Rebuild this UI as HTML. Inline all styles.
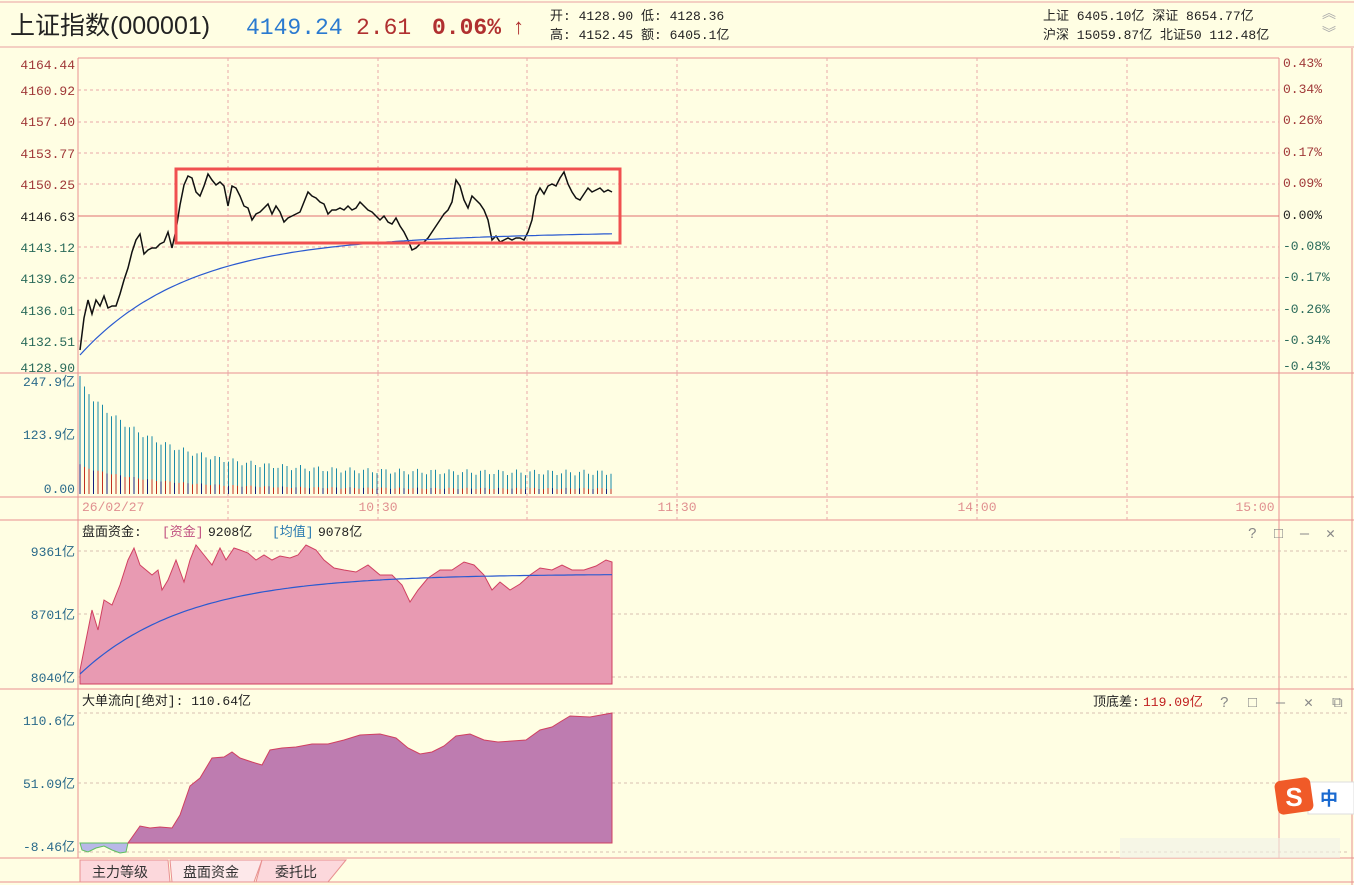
<!DOCTYPE html>
<html><head><meta charset="utf-8"><style>
body{margin:0;background:#fffee3;width:1354px;height:885px;overflow:hidden;font-family:"Liberation Mono","Noto Sans CJK SC",monospace;}
svg{position:absolute;left:0;top:0}
text{font-family:"Liberation Mono","Noto Sans CJK SC",monospace;font-size:13px}
</style></head><body>
<svg width="1354" height="885" id="s">
<rect width="1354" height="885" fill="#fffee3"/>
<line x1="0" y1="2" x2="1354" y2="2" stroke="#e8a0a0"/>
<line x1="0" y1="47" x2="1354" y2="47" stroke="#e8a0a0"/>
<text x="10" y="34" style="font-size:25px;font-family:'Liberation Sans','Noto Sans CJK SC',sans-serif" fill="#222">上证指数(000001)</text>
<text x="246" y="34" style="font-size:23px" fill="#2a7ad0">4149.24</text>
<text x="356" y="34" style="font-size:23px" fill="#b03030">2.61</text>
<text x="432" y="34" style="font-size:23px;font-weight:bold" fill="#b03030">0.06%</text>
<text x="512" y="34" style="font-size:22px;font-weight:bold" fill="#b03030">↑</text>
<text x="550" y="20" fill="#222">开: 4128.90  低: 4128.36</text>
<text x="550" y="39" fill="#222">高: 4152.45  额: 6405.1亿</text>
<text x="1043" y="20" fill="#222">上证 6405.10亿  深证 8654.77亿</text>
<text x="1043" y="39" fill="#222">沪深 15059.87亿  北证50 112.48亿</text>
<text x="1322" y="18" fill="#aaa" style="font-size:14px">︽</text>
<text x="1322" y="38" fill="#aaa" style="font-size:14px">︾</text>
<g id="g"></g>
</svg>
<script>
var g=document.getElementById('g'),h='';
function L(x1,y1,x2,y2,c,d,w){h+='<line x1="'+x1+'" y1="'+y1+'" x2="'+x2+'" y2="'+y2+'" stroke="'+c+'"'+(d?' stroke-dasharray="3,3"':'')+(w?' stroke-width="'+w+'"':'')+'/>';}
function T(x,y,t,c,a,s){h+='<text x="'+x+'" y="'+y+'" fill="'+c+'"'+(a?' text-anchor="'+a+'"':'')+(s?' style="'+s+'"':'')+'>'+t+'</text>';}
var R='#e89090',D='#e8a8a8';
L(78,58,1279,58,R);L(78,58,78,858,R);L(1279,58,1279,858,R);
L(0,373,1354,373,R);L(0,497,1354,497,R);L(0,520,1354,520,R);L(0,689,1354,689,R);L(0,858,1354,858,R);L(0,882,1354,882,R);
L(1352,48,1352,885,R);
var ys=[90,122,153,184,247,278,310,341];ys.forEach(function(y){L(78,y,1279,y,D,1)});
L(78,216,1279,216,'#e07070');
[228,378,527,677,827,977,1127].forEach(function(x){L(x,58,x,373,D,1);L(x,373,x,520,D,1)});
var pl=['4164.44','4160.92','4157.40','4153.77','4150.25','4146.63','4143.12','4139.62','4136.01','4132.51','4128.90'];
var py=[69,95,126,158,189,221,252,283,315,346,372];
pl.forEach(function(t,i){T(75,py[i],t,i<5?'#a03838':(i==5?'#222':'#2a6a5a'),'end')});
var pr=['0.43%','0.34%','0.26%','0.17%','0.09%','0.00%','-0.08%','-0.17%','-0.26%','-0.34%','-0.43%'];
pr.forEach(function(t,i){T(1283,py[i]-2,t,i<5?'#a03838':(i==5?'#222':'#2a6a5a'))});
var p=[350,318,300,314,300,306,296,308,306,306,294,280,268,252,240,234,254,250,248,248,244,242,232,248,230,205,185,176,178,192,196,186,174,180,185,182,186,206,186,188,196,206,208,220,214,212,208,204,214,206,212,222,218,216,214,212,202,192,196,198,202,204,214,210,210,208,210,206,210,208,202,206,210,212,216,220,216,222,224,218,226,232,240,250,248,244,242,238,232,226,220,214,210,202,180,186,200,208,196,200,204,210,220,240,236,242,240,238,240,238,238,240,232,220,196,188,194,186,184,186,178,172,184,192,198,200,194,188,192,190,188,192,190,192];
var s='';p.forEach(function(y,i){s+=(80+i*4)+','+y+' '});
h+='<polyline points="'+s+'" fill="none" stroke="#111" stroke-width="1.5"/>';
s='';for(var x=80;x<=612;x+=4){var t=(x-80)/532;var y=239+116*Math.exp(-t*5)-6*t;s+=x+','+y.toFixed(1)+' ';}
h+='<polyline points="'+s+'" fill="none" stroke="#2a5ad0" stroke-width="1.2"/>';
h+='<rect x="176" y="169" width="444" height="74" fill="none" stroke="#f05050" stroke-width="3"/>';
T(75,386,'247.9亿','#2a6a8a','end');T(75,439,'123.9亿','#2a6a8a','end');T(75,493,'0.00','#2a6a8a','end');
var i=0;for(var x=80;x<=612;x+=4.5,i++){var v=247.9*Math.exp(-i*0.06)*0.75+45+Math.sin(i*1.7)*6;if(i==0)v=248;if(i==2)v=210;var yt=494-v*(118/248);L(x,yt,x,494,'#1a8aa8',0,1);L(x,494-v*0.12,x,494,i%3?'#c03020':'#102080',0,1);}
T(82,511,'26/02/27','#e09090');T(378,511,'10:30','#e09090','middle');T(677,511,'11:30','#e09090','middle');T(977,511,'14:00','#e09090','middle');T(1255,511,'15:00','#e09090','middle');
T(82,536,'盘面资金:','#222');T(162,536,'[资金]','#c05080');T(208,536,'9208亿','#222');T(272,536,'[均值]','#2a7ab0');T(318,536,'9078亿','#222');
T(1248,538,'? □ — ✕','#888','','font-size:15px;letter-spacing:4px');
[551,614].forEach(function(y){L(78,y,1350,y,'#d8c0b0',1)});L(78,677,1350,677,'#d8c0b0',1);
T(75,556,'9361亿','#2a6a8a','end');T(75,619,'8701亿','#2a6a8a','end');T(75,682,'8040亿','#2a6a8a','end');
var q=[[80,670],[86,640],[92,610],[98,630],[104,600],[112,605],[120,585],[128,560],[134,548],[140,565],[146,570],[152,575],[158,570],[162,590],[168,580],[176,560],[184,582],[190,560],[196,545],[204,555],[212,565],[220,548],[226,560],[234,548],[240,550],[248,553],[256,560],[264,555],[272,560],[280,556],[290,558],[298,555],[306,545],[316,550],[324,560],[334,568],[344,570],[356,572],[368,565],[380,575],[392,575],[402,585],[410,602],[418,590],[428,578],[440,570],[452,570],[464,562],[474,565],[484,575],[492,590],[500,582],[510,590],[520,584],[530,575],[540,568],[552,570],[562,565],[572,570],[584,570],[596,566],[606,560],[612,562]];
s='80,684 ';q.forEach(function(a){s+=a[0]+','+a[1]+' '});s+='612,684';
h+='<polygon points="'+s+'" fill="#e89ab2" stroke="#d04060"/>';
s='';for(var x=80;x<=612;x+=4){var t=(x-80)/532;var y=574+100*Math.exp(-t*5);s+=x+','+y.toFixed(1)+' ';}
h+='<polyline points="'+s+'" fill="none" stroke="#2a5ad0" stroke-width="1.2"/>';
T(82,705,'大单流向[绝对]:  110.64亿','#222');T(1093,706,'顶底差:','#222');T(1143,706,'119.09亿','#c02020');
T(1220,707,'? □ — ✕ ⧉','#888','','font-size:15px;letter-spacing:5px');
[713,783,852].forEach(function(y){L(78,y,1350,y,'#d8c0b0',1)});
T(75,725,'110.6亿','#2a6a8a','end');T(75,788,'51.09亿','#2a6a8a','end');T(75,851,'-8.46亿','#2a6a8a','end');
h+='<polygon points="80,843 82,850 88,852 96,848 104,846 112,850 120,853 126,852 128,843" fill="#b8b8e8" stroke="#60c060"/>';
var r=[[128,843],[140,826],[150,828],[160,827],[172,828],[180,815],[190,786],[200,778],[212,758],[224,757],[232,752],[240,758],[252,762],[262,765],[270,750],[282,748],[296,747],[312,744],[328,744],[344,740],[360,735],[380,734],[396,738],[408,748],[420,754],[432,752],[444,746],[456,736],[470,734],[484,740],[498,742],[512,741],[526,740],[540,730],[552,727],[560,722],[570,716],[590,717],[612,713]];
s='';r.forEach(function(a){s+=a[0]+','+a[1]+' '});s+='612,843';
h+='<polygon points="'+s+'" fill="#be7cb0" stroke="#d04060"/>';
h+='<polygon points="80,860 168,860 170,882 80,882" fill="#fcd8dc" stroke="#e89090"/>';
h+='<polygon points="170,860 262,860 254,882 172,882" fill="#fde8ea" stroke="#e89090"/>';
h+='<polygon points="262,860 346,860 328,882 256,882" fill="#fcd8dc" stroke="#e89090"/>';
T(92,877,'主力等级','#333','','font-size:14px;font-family:Noto Sans CJK SC');T(183,877,'盘面资金','#333','','font-size:14px;font-family:Noto Sans CJK SC');T(275,877,'委托比','#333','','font-size:14px;font-family:Noto Sans CJK SC');
h+='<rect x="1308" y="782" width="46" height="32" fill="#fff" stroke="#ddd"/>';
h+='<rect x="1276" y="779" width="36" height="34" rx="6" fill="#f05a28" transform="rotate(-8 1294 796)"/>';
T(1294,806,'S','#fff','middle','font-size:26px;font-weight:bold;font-family:Liberation Sans');
T(1320,805,'中','#1a6ad0','','font-size:18px;font-weight:bold;font-family:Noto Sans CJK SC');
h+='<rect x="1120" y="838" width="220" height="20" fill="#f0f0e8" opacity="0.6"/>';
g.innerHTML=h;
</script>
</body></html>
